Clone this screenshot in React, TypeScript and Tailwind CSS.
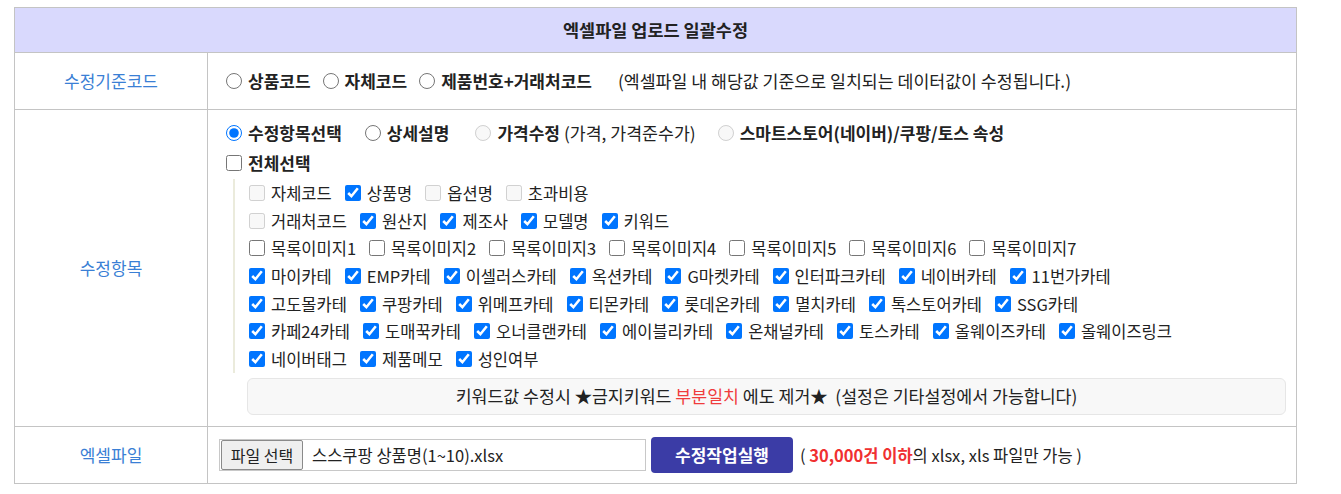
import React from 'react';

type Item = { label: string; checked?: boolean; disabled?: boolean };

const gridRows: Item[][] = [
  [
    { label: '자체코드', disabled: true },
    { label: '상품명', checked: true },
    { label: '옵션명', disabled: true },
    { label: '초과비용', disabled: true },
  ],
  [
    { label: '거래처코드', disabled: true },
    { label: '원산지', checked: true },
    { label: '제조사', checked: true },
    { label: '모델명', checked: true },
    { label: '키워드', checked: true },
  ],
  [1, 2, 3, 4, 5, 6, 7].map((n) => ({ label: `목록이미지${n}` })),
  ['마이카테', 'EMP카테', '이셀러스카테', '옥션카테', 'G마켓카테', '인터파크카테', '네이버카테', '11번가카테'].map((l) => ({ label: l, checked: true })),
  ['고도몰카테', '쿠팡카테', '위메프카테', '티몬카테', '롯데온카테', '멸치카테', '톡스토어카테', 'SSG카테'].map((l) => ({ label: l, checked: true })),
  ['카페24카테', '도매꾹카테', '오너클랜카테', '에이블리카테', '온채널카테', '토스카테', '올웨이즈카테', '올웨이즈링크'].map((l) => ({ label: l, checked: true })),
  ['네이버태그', '제품메모', '성인여부'].map((l) => ({ label: l, checked: true })),
];

function Radio({ label, checked, disabled, gap, children }: { label: string; checked?: boolean; disabled?: boolean; gap: string; children?: React.ReactNode }) {
  return (
    <label className={`inline-flex items-center ${gap}`}>
      <input type="radio" name={disabled ? undefined : 'r'} defaultChecked={checked} disabled={disabled} className="w-4 h-4 m-0 mr-[6px]" />
      <span className="font-bold text-[17px]">{label}</span>
      {children}
    </label>
  );
}

function Check({ item }: { item: Item }) {
  return (
    <label className="inline-flex items-center mr-[13px]">
      <input type="checkbox" defaultChecked={item.checked} disabled={item.disabled} className="w-4 h-4 m-0 mr-[6px]" />
      <span>{item.label}</span>
    </label>
  );
}

export default function App() {
  const label = 'border border-[#c4c4c4] text-center text-[#3a7fd5] text-[17px] w-[193px]';
  const cell = 'border border-[#c4c4c4] align-top';

  return (
    <div className="pl-[14px] pt-[7px] bg-white min-h-screen font-['Noto_Sans_CJK_KR','Noto_Sans',sans-serif] text-[16.5px] text-[#222] leading-[28px]">
      <table className="w-[1283px] border-collapse">
        <tbody>
          <tr>
            <td colSpan={2} className="h-[45px] border border-[#c4c4c4] bg-[#d9d9fd] text-center text-[17.5px] font-semibold">
              엑셀파일 업로드 일괄수정
            </td>
          </tr>
          <tr>
            <td className={`${label} h-[57px]`}>수정기준코드</td>
            <td className="border border-[#c4c4c4] pl-[18px]">
              <div className="flex items-center">
                <Radio label="상품코드" gap="mr-[12px]" />
                <Radio label="자체코드" gap="mr-[12px]" />
                <Radio label="제품번호+거래처코드" checked gap="mr-[26px]" />
                <span className="text-[17.3px]">(엑셀파일 내 해당값 기준으로 일치되는 데이터값이 수정됩니다.)</span>
              </div>
            </td>
          </tr>
          <tr>
            <td className={label}>수정항목</td>
            <td className={`${cell} pl-[18px] pt-[9px] pb-[11px] pr-[10px]`}>
              <div className="flex items-center">
                <Radio label="수정항목선택" checked gap="mr-[23px]" />
                <Radio label="상세설명" gap="mr-[26px]" />
                <Radio label="가격수정" disabled gap="mr-[22px]">
                  <span className="ml-[4px] text-[17.3px]">(가격, 가격준수가)</span>
                </Radio>
                <Radio label="스마트스토어(네이버)/쿠팡/토스 속성" disabled gap="" />
              </div>
              <div className="flex items-center mt-[2px]">
                <label className="inline-flex items-center">
                  <input type="checkbox" className="w-4 h-4 m-0 mr-[6px]" />
                  <span className="font-bold text-[17px]">전체선택</span>
                </label>
              </div>
              <div className="mt-[2px] ml-[7px] pl-[14px] border-l-2 border-[#ebebdc]">
                {gridRows.map((row, i) => (
                  <div key={i} className="flex items-center h-[27.7px]">
                    {row.map((it) => (
                      <Check key={it.label} item={it} />
                    ))}
                  </div>
                ))}
              </div>
              <div className="mt-[5px] ml-[21px] h-[37px] flex items-center justify-center rounded-[6px] border border-[#e6e6e6] bg-[#f8f8f8] text-[17.3px]">
                <span>
                  키워드값 수정시 ★금지키워드 <span className="text-[#f03c3c]">부분일치</span> 에도 제거★&nbsp; (설정은 기타설정에서 가능합니다)
                </span>
              </div>
            </td>
          </tr>
          <tr>
            <td className={`${label} h-[57px]`}>엑셀파일</td>
            <td className="border border-[#c4c4c4] pl-[11px]">
              <div className="flex items-center">
                <div className="flex items-center w-[427px] h-[32px] border border-[#c8c8c8]">
                  <button className="h-[30px] w-[82px] ml-[1px] bg-[#efefef] border border-[#8a8a8a] rounded-[2px] text-[16px] leading-none">
                    파일 선택
                  </button>
                  <span className="ml-[9px]">스스쿠팡 상품명(1~10).xlsx</span>
                </div>
                <button className="ml-[5px] w-[142px] h-[36px] rounded-[4px] bg-[#3b3ca6] text-white font-bold text-[17px] leading-none">
                  수정작업실행
                </button>
                <span className="ml-[7px]">
                  ( <span className="font-bold text-[#f03030]">30,000건 이하</span>의 xlsx, xls 파일만 가능 )
                </span>
              </div>
            </td>
          </tr>
        </tbody>
      </table>
    </div>
  );
}
